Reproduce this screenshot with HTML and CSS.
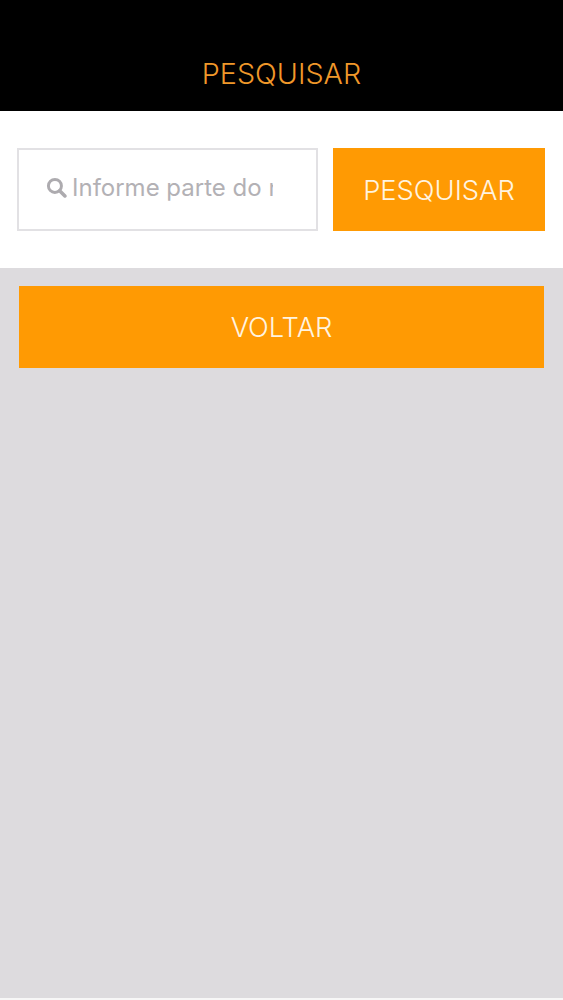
FILE: index.html
```html
<!DOCTYPE html>
<html>
  <head>
    <meta charset="utf-8">
    <title>Pesquisar</title>
    <link rel="stylesheet" href="styles.css">
  </head>

  <body>
    <div class="header">PESQUISAR</div>
    <div class="search">
      <div class="field">
        <svg class="icon" viewBox="0 0 20 20" width="21" height="21">
          <circle cx="8.5" cy="8.5" r="6.2" fill="none" stroke="#adabaf" stroke-width="2.8"/>
          <path d="M13 13l5 5" fill="none" stroke="#adabaf" stroke-width="3.4" stroke-linecap="round"/>
        </svg>
        <div class="placeholder">Informe parte do nome</div>
      </div>
      <div class="button go">PESQUISAR</div>
    </div>
    <div class="content">
      <div class="button back">VOLTAR</div>
    </div>
    <div class="bottom"></div>
  </body>
</html>
```

FILE: styles.css
```css
*, *:before, *:after {
  box-sizing: border-box;
}
html, body {
  padding: 0;
  margin: 0;
}
body {
  display: flex;
  flex-direction: column;
  height: 1000px;
  font-family: "Inter", "Liberation Sans", sans-serif;
  background: #f7f7f7;
}
.header {
  height: 111px;
  padding-top: 60px;
  text-align: center;
  font-size: 28.7px;
  font-weight: 350;
  line-height: 28px;
  color: #f0982a;
  background: #000;
}
.search {
  display: flex;
  height: 157px;
  padding: 37px 18px 37px 17px;
  gap: 15px;
  background: #fff;
}
.field {
  display: flex;
  align-items: center;
  width: 301px;
  padding: 0 43px 4px 27px;
  border: 2px solid #e2e1e4;
}
.icon {
  flex: none;
  margin-right: 5px;
}
.placeholder {
  overflow: hidden;
  white-space: nowrap;
  font-size: 24px;
  color: #b3b1b5;
}
.button {
  display: flex;
  flex: 1;
  align-items: center;
  justify-content: center;
  font-size: 27.3px;
  font-weight: 350;
  color: #fff4e0;
  background: #ff9a03;
}
.go {
  padding-top: 2px;
}
.content {
  flex: 1;
  padding: 18px 19px 0;
  background: #dddbde;
}
.back {
  flex: none;
  height: 82px;
}
.bottom {
  height: 2px;
}
```
